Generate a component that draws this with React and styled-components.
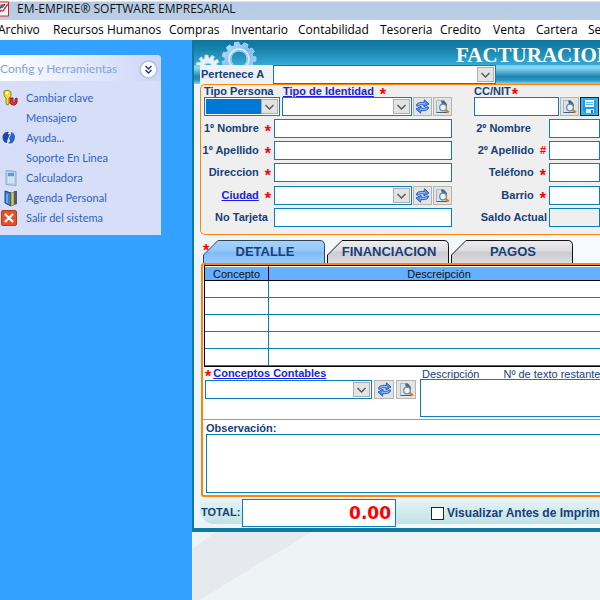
import React from 'react';
import styled, { createGlobalStyle, css } from 'styled-components';

const c = {
  blue: '#0a7ebd',
  navy: '#174078',
  orange: '#ff8408',
  teal: '#0f7a9f',
  link: '#1c1ce0',
  red: '#ff0000',
};

const Global = createGlobalStyle`
  *, *::before, *::after { box-sizing: border-box; }
  body { margin: 0; overflow: hidden; font-family: "Liberation Sans", Arial, sans-serif; font-size: 11px; }
  button, input, select, textarea { font: inherit; margin: 0; border-radius: 0; }
`;

const Page = styled.div`
  display: flex;
  flex-direction: column;
  min-height: 100vh;
  overflow: hidden;
`;

const TitleBar = styled.header`
  display: flex;
  align-items: center;
  gap: 8px;
  height: 20px;
  padding-bottom: 2px;
  background: linear-gradient(#ffffff 0 1px, #b4cbe5 2px, #bbcfe6 100%);
  font: 12px/16px "Open Sans", sans-serif;
  color: #111;
  white-space: nowrap;
`;

const MenuBar = styled.nav`
  display: grid;
  grid-template-columns: 55px 116px 62px 67px 82px 60px 53px 43px 52px 60px;
  align-items: center;
  height: 20px;
  margin-left: -2px;
  background: #fff;
  font: 12px/16px "Open Sans", sans-serif;
`;

const MenuItem = styled.button`
  padding: 0;
  border: 0;
  background: none;
  color: #000;
  text-align: left;
  white-space: nowrap;
`;

const Workspace = styled.div`
  display: flex;
  flex: 1;
  background: #eef3f6;
`;

const Sidebar = styled.aside`
  flex: 0 0 192px;
  padding-top: 15px;
  background: #33a1ff;
`;

const TaskPanel = styled.section`
  width: 161px;
  height: 180px;
  border-radius: 0 4px 0 0;
  overflow: hidden;
  background: #d6dff7;
`;

const TaskHeader = styled.div`
  display: flex;
  align-items: center;
  justify-content: space-between;
  height: 26px;
  padding: 2px 4px 0 0;
  background: linear-gradient(90deg, #ffffff, #cbd6f8);
  color: #7fa3e4;
  font: 12px/16px Lato, sans-serif;
`;

const Collapse = styled.button`
  display: grid;
  place-items: center;
  width: 17px;
  height: 17px;
  padding: 0;
  border: 1px solid #b9c5e6;
  border-radius: 50%;
  background: #fff;
  box-shadow: 0 0 2px #8f9fd0;
`;

const TaskList = styled.ul`
  margin: 0;
  padding: 7px 0 0;
  list-style: none;
`;

const TaskItem = styled.li`
  display: grid;
  grid-template-columns: 26px 1fr;
  align-items: center;
  height: 20px;
  font: 11px/16px Lato, sans-serif;
`;

const TaskLink = styled.a`
  color: #2f62c0;
  text-decoration: none;
`;

const Main = styled.main`
  display: flex;
  flex: 1;
  flex-direction: column;
  min-width: 0;
`;

const Frame = styled.section`
  position: relative;
  border-left: 2px solid ${c.teal};
  border-bottom: 4px solid ${c.teal};
  background: linear-gradient(90deg, #eef5fa, #f8fbfd);
`;

const Banner = styled.div`
  height: 25px;
  padding-left: 262px;
  background: linear-gradient(#0f749d, #1682aa 35%, #37aad6);
  color: #fff;
  font: bold 21px/30px "Liberation Serif", serif;
  white-space: nowrap;
`;

const GearArt = styled.svg`
  position: absolute;
  left: 0;
  top: 0;
`;

const OwnerRow = styled.div`
  position: relative;
  display: flex;
  height: 19px;
  padding-left: 6px;
  background: linear-gradient(#77c9ec, #8fd6f2 15%, #1c87b0 60%, #2a97bf 80%, #8fd3ec);
`;

const OwnerLabel = styled.label`
  width: 73px;
  padding-left: 1px;
  background: #edf2f5;
  color: ${c.navy};
  font-weight: bold;
  line-height: 19px;
`;

const Body = styled.div`
  padding-left: 6px;
`;

const Fieldset = styled.section`
  height: 151px;
  border: 1px solid ${c.orange};
  border-right: 0;
  border-radius: 5px 0 0 5px;
  background: #efefef;
`;

const IdentityGroup = styled.div`
  display: grid;
  grid-template-rows: 12px 19px;
`;

const IdentityLine = styled.div`
  display: flex;
  gap: 22px;
  padding-left: 3px;
`;

const Controls = styled.div`
  display: flex;
  gap: 1px;
  min-width: 0;
`;

const labelText = css`
  color: ${c.navy};
  font-weight: bold;
  line-height: 13px;
  white-space: nowrap;
`;

const Label = styled.label`
  ${labelText}
`;

const PlainLabel = styled.label`
  color: ${c.navy};
  line-height: 14px;
  white-space: nowrap;
`;

const LinkLabel = styled.a`
  ${labelText}
  color: ${c.link};
  text-decoration: underline;
`;

const Mark = styled.span`
  color: ${c.red};
  font-weight: bold;
  font-size: ${(p) => (p.$hash ? 11 : 16)}px;
  line-height: ${(p) => (p.$hash ? 13 : 19)}px;
  height: 13px;
`;

const Field = styled.input`
  width: ${(p) => (p.$w ? p.$w + 'px' : '100%')};
  height: 19px;
  padding: 0 3px;
  border: 1px solid ${c.blue};
  background: ${(p) => (p.readOnly ? '#efefef' : '#fff')};
  outline: 0;
`;

const SelectBox = styled.span`
  display: flex;
  width: ${(p) => (p.$w ? p.$w + 'px' : 'auto')};
  flex: ${(p) => (p.$w ? 'none' : 1)};
  height: 19px;
  padding: 1px;
  border: 1px solid ${c.blue};
  background: #fff;
`;

const NativeSelect = styled.select`
  flex: 1;
  min-width: 0;
  border: 0;
  appearance: none;
  outline: 0;
  background: ${(p) => (p.$active ? '#0078d7' : '#fff')};
`;

const Arrow = styled.span`
  display: grid;
  place-items: center;
  width: 17px;
  border: 1px solid #adadad;
  background: #e3e3e3;
  pointer-events: none;
`;

const IconButton = styled.button`
  display: grid;
  place-items: center;
  flex: none;
  width: ${(p) => p.$w || 19}px;
  height: 19px;
  padding: 0;
  border: 1px solid ${(p) => (p.$dark ? '#222' : '#b4b4b4')};
  background: ${(p) => (p.$dark ? '#35b0f0' : '#e4e4e4')};
`;

const FormGrid = styled.div`
  display: grid;
  grid-template-columns: 73px 178px 97px 1fr;
  grid-template-rows: 22px 22px 23px 22px 19px;
  padding-top: 3px;
`;

const LabelCell = styled.div`
  display: flex;
  justify-content: flex-end;
  align-items: flex-start;
  gap: 6px;
  padding: 3px ${(p) => p.$end || 3}px 0 0;
`;

const Tabs = styled.div`
  display: flex;
  gap: 2px;
  margin-top: 5px;
  padding-left: 3px;
  height: 23px;
`;

const TabMark = styled.div`
  position: absolute;
  left: 9px;
  top: 201px;
`;

const Tab = styled.button`
  display: grid;
  place-items: center;
  width: 122px;
  height: 23px;
  padding: 0;
  border: 0;
  background: none;
  color: ${c.navy};
  font: bold 13px/22px "Liberation Sans", sans-serif;

  & > * { grid-area: 1 / 1; }
`;

const TabText = styled.span`
  padding-left: 2px;
`;

const TabPanel = styled.section`
  margin-left: 1px;
  border: 2px solid ${c.orange};
  border-right: 0;
  border-radius: 3px 0 0 3px;
  background: #fff;
`;

const Table = styled.table`
  width: calc(100% - 1px);
  margin-left: 1px;
  border: 1px solid #000;
  border-right: 0;
  border-spacing: 0;
  table-layout: fixed;
`;

const Th = styled.th`
  width: ${(p) => (p.$w ? p.$w + 'px' : 'auto')};
  height: 15px;
  padding: 1px 0 0;
  border-top: 1px solid #fff;
  border-right: ${(p) => (p.$w ? '1px solid #000' : 0)};
  border-bottom: 1px solid #000;
  background: #62b0ff;
  color: #111;
  font-weight: normal;
  line-height: 12px;
`;

const HeadText = styled.span`
  display: block;
  width: 340px;
  text-align: center;
`;

const Td = styled.td`
  height: 17px;
  padding: 0;
  border-bottom: 1px solid ${c.blue};
  border-right: ${(p) => (p.$first ? `1px solid ${c.blue}` : 0)};
`;

const ConceptRow = styled.div`
  display: grid;
  grid-template-columns: 215px 1fr;
  padding: 0 0 2px 2px;
  border-bottom: 1px solid ${c.orange};
`;

const Stack = styled.div`
  display: grid;
  grid-template-rows: ${(p) => p.$top || 12}px auto;
  align-content: start;
`;

const Inline = styled.div`
  display: flex;
  gap: ${(p) => p.$gap || 0}px;
  padding-left: ${(p) => p.$pad || 0}px;
`;

const Area = styled.textarea`
  display: block;
  width: 100%;
  height: ${(p) => p.$h}px;
  border: 1px solid ${c.blue};
  border-right: 0;
  background: #fff;
  resize: none;
  outline: 0;
`;

const Notes = styled.div`
  display: grid;
  grid-template-rows: 12px auto;
  padding: 2px 0 2px 3px;
`;

const Footer = styled.footer`
  display: flex;
  height: 27px;
  margin-bottom: 4px;
  padding: 2px 0 0 1px;
  border-radius: 0 0 0 14px;
  background: linear-gradient(#eaf5f7, #c0e2e4);
`;

const TotalLabel = styled.label`
  ${labelText}
  flex: none;
  width: 41px;
  line-height: 26px;
`;

const TotalInput = styled.input`
  flex: none;
  width: 154px;
  height: 28px;
  padding: 0 4px;
  border: 1px solid ${c.blue};
  background: #fff;
  color: ${c.red};
  font: bold 17px "DejaVu Sans", sans-serif;
  text-align: right;
  outline: 0;
`;

const CheckLabel = styled.label`
  ${labelText}
  display: flex;
  align-items: center;
  gap: 3px;
  height: 29px;
  margin-left: 35px;
  font-size: 12px;
`;

const Check = styled.input`
  flex: none;
  appearance: none;
  width: 13px;
  height: 13px;
  border: 1px solid #222;
  background: #fff;
`;

const Backdrop = styled.div`
  flex: 1;

  &::before {
    content: "";
    display: block;
    width: 120px;
    height: 68px;
    background: #e6eaee;
    clip-path: polygon(24px 0, 120px 0, 66px 32px, 8px 68px, 0 68px, 0 17px);
  }
`;

function gearPath(cx, cy, outer, inner, teeth, hole) {
  const pts = [];
  for (let i = 0; i < teeth; i += 1) {
    [[-0.34, inner], [-0.22, outer], [0.22, outer], [0.34, inner]].forEach(([o, r]) => {
      const a = ((i + o) / teeth) * Math.PI * 2;
      pts.push(`${(cx + Math.cos(a) * r).toFixed(1)} ${(cy + Math.sin(a) * r).toFixed(1)}`);
    });
  }
  return `M${pts.join('L')}Z M${cx - hole} ${cy}a${hole} ${hole} 0 1 0 ${hole * 2} 0a${hole} ${hole} 0 1 0 ${-hole * 2} 0Z`;
}

const Gears = () => (
  <GearArt width="82" height="44" aria-hidden="true">
    <defs>
      <linearGradient id="gear" x1="0" y1="0" x2="1" y2="1">
        <stop offset="0" stopColor="#c4e4fb" />
        <stop offset="0.5" stopColor="#7fbdf0" />
        <stop offset="1" stopColor="#b4dcfa" />
      </linearGradient>
    </defs>
    <path d="M0 44V32Q8 26 20 28L62 30V44Z" fill="#c9e9f5" opacity=".75" />
    <path d={gearPath(45, 19, 17, 14, 11, 8)} fill="url(#gear)" stroke="#9fd0f4" fillRule="evenodd" />
    <circle cx="45" cy="19" r="10" fill="none" stroke="#dcf0fd" strokeWidth="1.500" />
    <path d={gearPath(14, 27, 12, 9, 11, 4)} fill="#e9f1f4" stroke="#c5dce4" fillRule="evenodd" />
  </GearArt>
);

const Chevron = () => (
  <svg width="9" height="6" viewBox="0 0 9 6" aria-hidden="true">
    <path d="M.5 1l4 4 4-4" fill="none" stroke="#555" strokeWidth="1.3" />
  </svg>
);

const RefreshIcon = () => (
  <svg width="15" height="15" viewBox="0 0 15 15" aria-hidden="true">
    <path d="M1.500 7C1.500 4 4 3 9 3.500L9.500 .8 14 5 9 8V6C6 5.300 4 5.500 3.500 7Z" fill="#4f8ff0" stroke="#1d56c0" strokeWidth=".9" />
    <path d="M13.500 8c0 3-2.500 4-7.500 3.500L5.500 14.200 1 10l5-3v2C9 9.700 11 9.500 11.500 8Z" fill="#4f8ff0" stroke="#1d56c0" strokeWidth=".9" />
    <path d="M3 5.500Q5 4 10 4.700M12 9.500Q10 11 5 10.300" fill="none" stroke="#b6d4ff" strokeWidth=".8" />
  </svg>
);

const SearchIcon = () => (
  <svg width="15" height="15" viewBox="0 0 15 15" aria-hidden="true">
    <path d="M1.500 1.500h7l3 3v9h-10Z" fill="#dbe3e9" stroke="#aeb8c0" />
    <path d="M6 1.500h3l3 4-1 3-4-3Z" fill="#4d6680" />
    <path d="M1.500 13.500h11" stroke="#4b6075" />
    <circle cx="8" cy="8.500" r="3.300" fill="#edf6fb" stroke="#6d8ba5" strokeWidth="1.300" />
    <path d="M10.800 11.300l3 2.200" stroke="#d98416" strokeWidth="2.500" />
  </svg>
);

const DiskIcon = () => (
  <svg width="15" height="15" viewBox="0 0 15 15" aria-hidden="true">
    <path d="M1 1h13v13H3l-2-2Z" fill="#1f9de4" />
    <path d="M3 1h9v7H3Z" fill="#eaf8ff" />
    <path d="M4 3.500h7M4 5.500h7" stroke="#58bbed" />
    <path d="M4 10h8v4H4Z" fill="#e2edf3" />
    <path d="M9 11h2v3H9Z" fill="#167bb9" />
  </svg>
);

const LogoIcon = () => (
  <svg width="9" height="16" viewBox="0 0 9 16" aria-hidden="true">
    <path d="M0 1h8.500v14H0" fill="#fff" stroke="#e81818" />
    <path d="M0 7c2 0 3-2 5-4" fill="none" stroke="#333" strokeWidth="1.500" />
    <path d="M0 11c1-3 2-1 3-1s2-4 5-7" fill="none" stroke="#c33" strokeWidth="1.500" />
    <circle cx="2" cy="5" r="2" fill="#668" />
  </svg>
);

const TaskIcon = ({ kind }) => (
  <svg width="20" height="18" viewBox="0 0 20 18" aria-hidden="true">
    {kind === 'key' && (
      <g>
        <path d="M4 2l4-1 3 2v4L9 9v6l-2 1-1-2V9L4 7Z" fill="#f5dc35" stroke="#9c8418" />
        <circle cx="7" cy="4" r="1.200" fill="#fff" />
        <path d="M10 9v4c0 4 7 4 7 0V9l-2 1v3c0 1-2 1-2 0V9Z" fill="#e03a35" stroke="#8f1616" />
      </g>
    )}
    {kind === 'help' && (
      <g>
        <circle cx="9" cy="9" r="7" fill="#dfe8f6" />
        <path d="M3 11C1 5 6 2 9 3 7 5 8 6 10 5c-1 3-3 5-3 9-2 0-3-1-4-3Z" fill="#1b4aa8" />
        <path d="M11 3c4 1 5 5 3 9-2 3-4 3-6 2 3-1 2-4 1-4 1-3 2-4 2-7Z" fill="#2c65c8" />
      </g>
    )}
    {kind === 'calc' && (
      <g>
        <path d="M6 1.500l10 1v14l-10-1Z" fill="#b8d4ee" stroke="#8ba9c6" />
        <path d="M8 4h6v3H8Z" fill="#5f9ad8" />
        <path d="M8 9h6M8 11h6M8 13h6" stroke="#fff" strokeDasharray="1.500 .7" />
      </g>
    )}
    {kind === 'book' && (
      <g>
        <path d="M5 2l6 2v13l-6-3Z" fill="#3d7fd0" stroke="#1e477e" />
        <path d="M11 4l3-1v13l-3 1Z" fill="#e0c458" stroke="#776522" strokeWidth=".6" />
        <path d="M14 2h3v13l-3 1Z" fill="#4b5d75" />
        <path d="M7 5v9" stroke="#a9d3f5" />
      </g>
    )}
    {kind === 'exit' && (
      <g>
        <rect x="1.500" y="1.500" width="15" height="15" rx="1.500" fill="#e5502d" stroke="#b83a1a" />
        <path d="M5 5l8 8M13 5l-8 8" stroke="#fff" strokeWidth="2.200" />
      </g>
    )}
  </svg>
);

const Select = ({ w, active, ...rest }) => (
  <SelectBox $w={w}>
    <NativeSelect $active={active} {...rest} />
    <Arrow><Chevron /></Arrow>
  </SelectBox>
);

const LookupButtons = ({ w }) => (
  <>
    <IconButton type="button" $w={w} aria-label="Actualizar"><RefreshIcon /></IconButton>
    <IconButton type="button" $w={w} aria-label="Buscar"><SearchIcon /></IconButton>
  </>
);

const LabelFor = ({ id, text, mark, end }) => (
  <LabelCell $end={end}>
    <Label htmlFor={id}>{text}</Label>
    {mark && <Mark $hash={mark === '#'}>{mark}</Mark>}
  </LabelCell>
);

const TabButton = ({ text, active }) => (
  <Tab type="button" role="tab" aria-selected={!!active}>
    <svg width="122" height="23" viewBox="0 0 122 23" aria-hidden="true">
      <defs>
        <linearGradient id={`tab-${text}`} x1="0" y1="0" x2="0" y2="1">
          <stop offset="0" stopColor={active ? '#a5d2fc' : '#ededf0'} />
          <stop offset=".45" stopColor={active ? '#93c7fa' : '#dcdce0'} />
          <stop offset=".5" stopColor={active ? '#80bbf7' : '#cbcbd0'} />
          <stop offset="1" stopColor={active ? '#9bcdfb' : '#dedee2'} />
        </linearGradient>
      </defs>
      <path d="M.5 24V15L15 .5H117q4.500 0 4.500 5V24" fill={`url(#tab-${text})`} stroke={active ? '#345' : '#111'} />
    </svg>
    <TabText>{text}</TabText>
  </Tab>
);

const menu = ['Archivo', 'Recursos Humanos', 'Compras', 'Inventario', 'Contabilidad', 'Tesoreria', 'Credito', 'Venta', 'Cartera', 'Servicios'];
const tasks = [
  ['Cambiar clave', 'key'],
  ['Mensajero', ''],
  ['Ayuda...', 'help'],
  ['Soporte En Linea', ''],
  ['Calculadora', 'calc'],
  ['Agenda Personal', 'book'],
  ['Salir del sistema', 'exit'],
];

export default function App() {
  return (
    <Page>
      <Global />
      <TitleBar><LogoIcon />EM-EMPIRE® SOFTWARE EMPRESARIAL</TitleBar>
      <MenuBar>{menu.map((m) => <MenuItem type="button" key={m}>{m}</MenuItem>)}</MenuBar>
      <Workspace>
        <Sidebar>
          <TaskPanel>
            <TaskHeader>
              Config y Herramientas
              <Collapse type="button" aria-label="Contraer">
                <svg width="9" height="9" viewBox="0 0 9 9" aria-hidden="true">
                  <path d="M1.500 1l3 3 3-3M1.500 5l3 3 3-3" fill="none" stroke="#1c3f8c" strokeWidth="1.500" />
                </svg>
              </Collapse>
            </TaskHeader>
            <TaskList>
              {tasks.map(([text, kind]) => (
                <TaskItem key={text}><TaskIcon kind={kind} /><TaskLink href="#">{text}</TaskLink></TaskItem>
              ))}
            </TaskList>
          </TaskPanel>
        </Sidebar>
        <Main>
          <Frame>
            <Banner>FACTURACION</Banner>
            <Gears />
            <OwnerRow>
              <OwnerLabel htmlFor="owner">Pertenece A</OwnerLabel>
              <Select w={223} id="owner" />
            </OwnerRow>
            <Body>
              <Fieldset>
                <IdentityLine>
                  <Inline $gap={2}>
                    <IdentityGroup>
                      <Label htmlFor="person">Tipo Persona</Label>
                      <Select w={76} active id="person" />
                    </IdentityGroup>
                    <IdentityGroup>
                      <Inline $gap={6} $pad={1}>
                        <LinkLabel href="#" id="idtype">Tipo de Identidad</LinkLabel><Mark>*</Mark>
                      </Inline>
                      <Controls><Select w={130} aria-labelledby="idtype" /><LookupButtons /></Controls>
                    </IdentityGroup>
                  </Inline>
                  <IdentityGroup>
                    <Inline $gap={1}><Label htmlFor="nit">CC/NIT</Label><Mark>*</Mark></Inline>
                    <Controls>
                      <Field id="nit" $w={85} />
                      <IconButton type="button" aria-label="Buscar"><SearchIcon /></IconButton>
                      <IconButton type="button" $dark aria-label="Guardar"><DiskIcon /></IconButton>
                    </Controls>
                  </IdentityGroup>
                </IdentityLine>
                <FormGrid>
                  <LabelFor id="n1" text="1º Nombre" mark="*" />
                  <Field id="n1" />
                  <LabelFor id="n2" text="2º Nombre" end={18} />
                  <Field id="n2" />
                  <LabelFor id="a1" text="1º Apellido" mark="*" />
                  <Field id="a1" />
                  <LabelFor id="a2" text="2º Apellido" mark="#" />
                  <Field id="a2" />
                  <LabelFor id="dir" text="Direccion" mark="*" />
                  <Field id="dir" />
                  <LabelFor id="tel" text="Teléfono" mark="*" />
                  <Field id="tel" />
                  <LabelCell>
                    <LinkLabel href="#" id="city">Ciudad</LinkLabel><Mark>*</Mark>
                  </LabelCell>
                  <Controls><Select aria-labelledby="city" /><LookupButtons /></Controls>
                  <LabelFor id="bar" text="Barrio" mark="*" />
                  <Field id="bar" />
                  <LabelFor id="card" text="No Tarjeta" end={6} />
                  <Field id="card" />
                  <LabelFor id="bal" text="Saldo Actual" end={2} />
                  <Field id="bal" readOnly />
                </FormGrid>
              </Fieldset>
              <Tabs role="tablist">
                <TabButton text="DETALLE" active />
                <TabButton text="FINANCIACION" />
                <TabButton text="PAGOS" />
              </Tabs>
              <TabMark><Mark>*</Mark></TabMark>
              <TabPanel>
                <Table>
                  <thead>
                    <tr><Th $w={64}>Concepto</Th><Th><HeadText>Descreipción</HeadText></Th></tr>
                  </thead>
                  <tbody>
                    {[1, 2, 3, 4, 5].map((r) => <tr key={r}><Td $first /><Td /></tr>)}
                  </tbody>
                </Table>
                <ConceptRow>
                  <Stack $top={13}>
                    <Inline $gap={2}><Mark>*</Mark><LinkLabel href="#" id="concept">Conceptos Contables</LinkLabel></Inline>
                    <Inline $gap={2}>
                      <Select w={167} aria-labelledby="concept" />
                      <LookupButtons w={20} />
                    </Inline>
                  </Stack>
                  <Stack>
                    <Inline $gap={24} $pad={2}>
                      <PlainLabel htmlFor="desc">Descripción</PlainLabel>
                      <PlainLabel as="span">Nº de texto restante</PlainLabel>
                    </Inline>
                    <Area id="desc" $h={38} />
                  </Stack>
                </ConceptRow>
                <Notes>
                  <Label htmlFor="obs">Observación:</Label>
                  <Area id="obs" $h={59} />
                </Notes>
              </TabPanel>
              <Footer>
                <TotalLabel htmlFor="total">TOTAL:</TotalLabel>
                <TotalInput id="total" defaultValue="0.00" />
                <CheckLabel><Check type="checkbox" />Visualizar Antes de Imprimir</CheckLabel>
              </Footer>
            </Body>
          </Frame>
          <Backdrop />
        </Main>
      </Workspace>
    </Page>
  );
}
